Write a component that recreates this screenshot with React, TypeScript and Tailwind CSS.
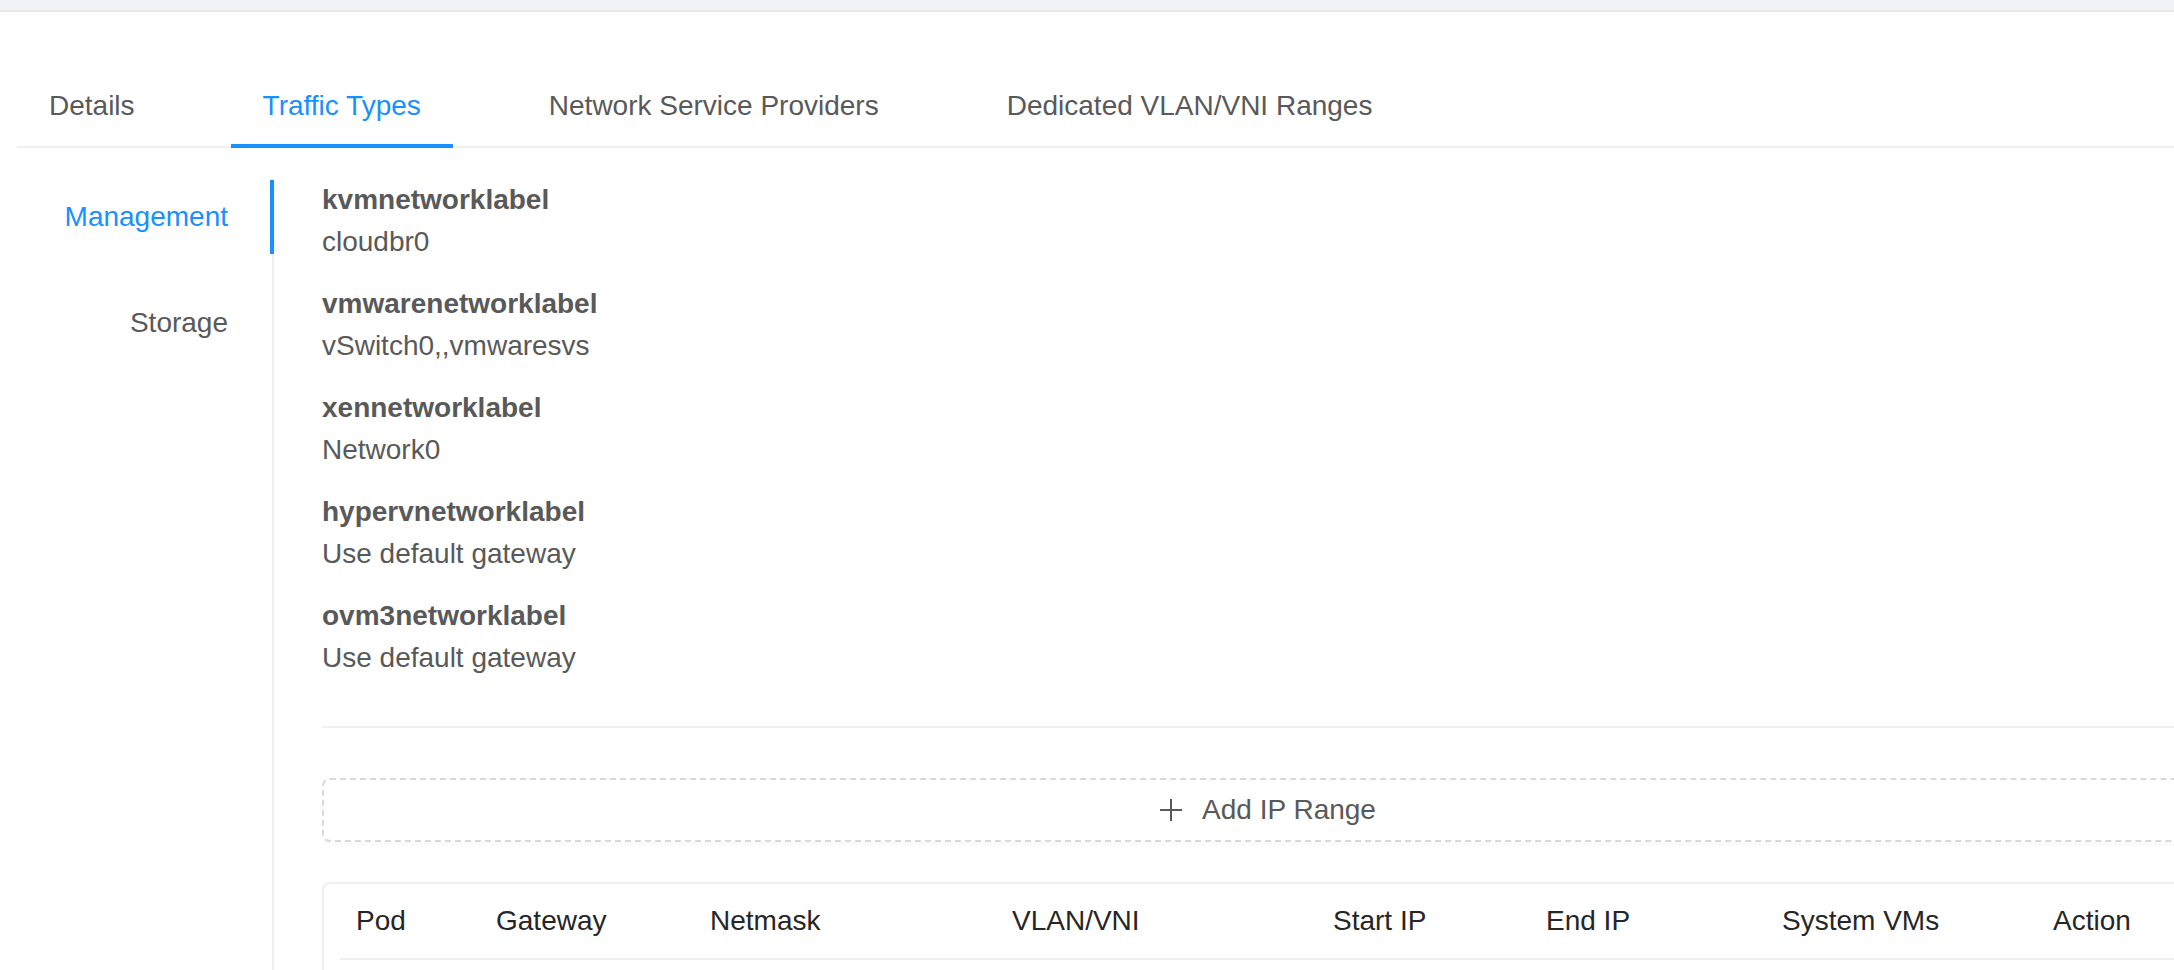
import { ReactNode } from "react";

const tabs = ["Details", "Traffic Types", "Network Service Providers", "Dedicated VLAN/VNI Ranges"];

const labels = [
  { name: "kvmnetworklabel", value: "cloudbr0" },
  { name: "vmwarenetworklabel", value: "vSwitch0,,vmwaresvs" },
  { name: "xennetworklabel", value: "Network0" },
  { name: "hypervnetworklabel", value: "Use default gateway" },
  { name: "ovm3networklabel", value: "Use default gateway" },
];

const columns = [
  { title: "Pod", width: "w-[140px]" },
  { title: "Gateway", width: "w-[214px]" },
  { title: "Netmask", width: "w-[302px]" },
  { title: "VLAN/VNI", width: "w-[321px]" },
  { title: "Start IP", width: "w-[213px]" },
  { title: "End IP", width: "w-[236px]" },
  { title: "System VMs", width: "w-[271px]" },
  { title: "Action", width: "flex-1" },
];

function PlusIcon() {
  return (
    <svg width="22" height="22" viewBox="0 0 22 22" fill="none" stroke="#595959" strokeWidth="2">
      <line x1="11" y1="0" x2="11" y2="22" />
      <line x1="0" y1="11" x2="22" y2="11" />
    </svg>
  );
}

function SideTab({ active, children }: { active?: boolean; children: ReactNode }) {
  return (
    <div
      className={`relative h-[74px] pr-[44px] text-right leading-[74px] ${
        active ? "text-[#1890ff]" : "text-[#595959]"
      }`}
    >
      {children}
      {active && <span className="absolute top-0 bottom-0 right-[-2px] w-[4px] bg-[#1890ff]" />}
    </div>
  );
}

export default function App() {
  return (
    <div className="h-[970px] w-[2174px] overflow-hidden bg-white font-['Liberation_Sans',Arial,sans-serif] text-[28px] text-[#595959]">
      <div className="h-[10px] bg-[#f0f2f5]" />
      <div className="h-[2px] bg-[#e8e8e8]" />

      <div className="pl-[17px] pt-[46px]">
        {/* top tabs */}
        <div className="flex gap-[64px] border-b-2 border-[#f0f0f0]">
          {tabs.map((t) => {
            const active = t === "Traffic Types";
            return (
              <div
                key={t}
                className={`-mb-[2px] border-b-4 px-[32px] pt-[26px] pb-[16px] leading-[44px] whitespace-nowrap ${
                  active ? "border-[#1890ff] text-[#1890ff]" : "border-transparent"
                }`}
              >
                {t}
              </div>
            );
          })}
        </div>

        <div className="mt-[32px] flex">
          {/* left nav */}
          <div className="flex w-[257px] shrink-0 flex-col gap-[32px] border-r-2 border-[#f0f0f0]">
            <SideTab active>Management</SideTab>
            <SideTab>Storage</SideTab>
          </div>

          {/* content */}
          <div className="shrink-0 pl-[48px]">
            <div className="w-[1892px] -mt-[1px]">
              <div className="flex flex-col gap-[20px]">
                {labels.map((l) => (
                  <div key={l.name}>
                    <div className="font-bold leading-[42px]">{l.name}</div>
                    <div className="leading-[42px]">{l.value}</div>
                  </div>
                ))}
              </div>

              <div className="mt-[47px] h-[2px] bg-[#f0f0f0]" />

              <button className="mt-[50px] flex h-[64px] w-full items-center justify-center gap-[20px] rounded-[8px] border-2 border-dashed border-[#d9d9d9] bg-white leading-[44px] text-[#595959] shadow-[0_4px_0_rgba(0,0,0,0.015)]">
                <PlusIcon />
                <span>Add IP Range</span>
              </button>

              <div className="mt-[40px] rounded-[8px] border-2 border-[#f0f0f0] px-[16px] pb-[40px]">
                <div className="flex border-b-2 border-[#f0f0f0] text-[#262626]">
                  {columns.map((c) => (
                    <div key={c.title} className={`${c.width} shrink-0 px-[16px] py-[16px] leading-[42px] whitespace-nowrap`}>
                      {c.title}
                    </div>
                  ))}
                </div>
              </div>
            </div>
          </div>
        </div>
      </div>
    </div>
  );
}
